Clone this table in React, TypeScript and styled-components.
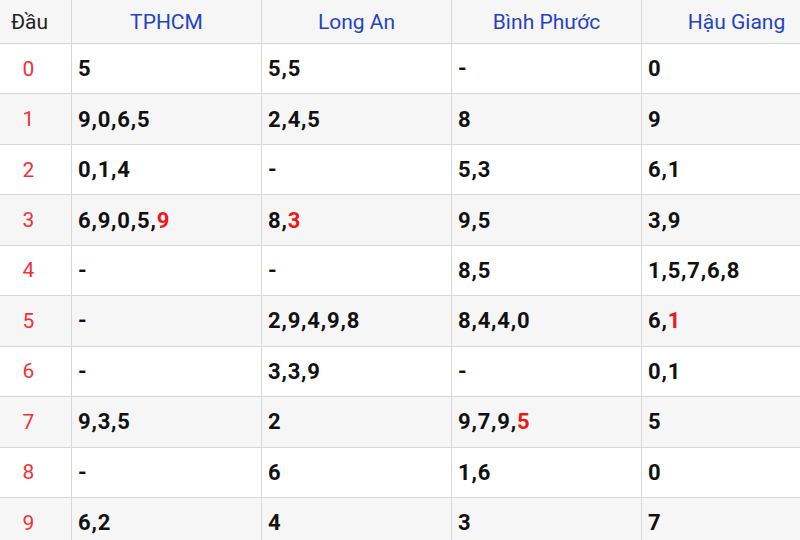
import * as React from "react";
import styled, { createGlobalStyle } from "styled-components";

const GlobalStyle = createGlobalStyle`
  html, body {
    margin: 0;
    padding: 0;
    background: #fff;
    overflow: hidden;
  }
  body {
    font-family: Roboto, "Noto Sans", sans-serif;
  }
`;

const provinces = ["TPHCM", "Long An", "Bình Phước", "Hậu Giang"];

// each cell: list of digits, the last one is red when flagged
type Cell = { digits: string[]; hot?: boolean };

const c = (s: string, hot?: boolean): Cell => ({
  digits: s === "-" ? ["-"] : s.split(","),
  hot,
});

const rows: Cell[][] = [
  [c("5"), c("5,5"), c("-"), c("0")],
  [c("9,0,6,5"), c("2,4,5"), c("8"), c("9")],
  [c("0,1,4"), c("-"), c("5,3"), c("6,1")],
  [c("6,9,0,5,9", true), c("8,3", true), c("9,5"), c("3,9")],
  [c("-"), c("-"), c("8,5"), c("1,5,7,6,8")],
  [c("-"), c("2,9,4,9,8"), c("8,4,4,0"), c("6,1", true)],
  [c("-"), c("3,3,9"), c("-"), c("0,1")],
  [c("9,3,5"), c("2"), c("9,7,9,5", true), c("5")],
  [c("-"), c("6"), c("1,6"), c("0")],
  [c("6,2"), c("4"), c("3"), c("7")],
];

const App: React.FC = () => {
  return (
    <>
      <GlobalStyle />
      <Table>
        <colgroup>
          <col style={{ width: 72 }} />
          {provinces.map(p => (
            <col key={p} style={{ width: 190 }} />
          ))}
        </colgroup>
        <thead>
          <HeadRow>
            <HeadCell>Đầu</HeadCell>
            {provinces.map(p => (
              <HeadCell key={p} province>
                {p}
              </HeadCell>
            ))}
          </HeadRow>
        </thead>
        <tbody>
          {rows.map((row, i) => (
            <Row key={i} striped={i % 2 === 1}>
              <IndexCell>{i}</IndexCell>
              {row.map((cell, j) => (
                <Cell key={j}>
                  {cell.digits.map((d, k) => {
                    const last = k === cell.digits.length - 1;
                    return (
                      <React.Fragment key={k}>
                        {last && cell.hot ? <Hot>{d}</Hot> : d}
                        {!last && ","}
                      </React.Fragment>
                    );
                  })}
                </Cell>
              ))}
            </Row>
          ))}
        </tbody>
      </Table>
    </>
  );
};

export default App;

const Table = styled.table`
  width: 832px;
  table-layout: fixed;
  border-collapse: collapse;
  margin-top: -1px;
  margin-left: -1px;
  td,
  th {
    border: 1px solid #d8d8d8;
  }
`;

const HeadRow = styled.tr`
  height: 44px;
  background: #f6f6f6;
`;

const HeadCell = styled.th<{ province?: boolean }>`
  font-weight: 400;
  font-size: 21px;
  text-align: center;
  vertical-align: middle;
  padding: ${p => (p.province ? "0" : "0 12px 0 0")};
  color: ${p => (p.province ? "#2443c2" : "#222")};
`;

const Row = styled.tr<{ striped?: boolean }>`
  height: 50.45px;
  background: ${p => (p.striped ? "#f6f6f6" : "#fff")};
`;

const IndexCell = styled.td`
  font-size: 21px;
  color: #f0313c;
  text-align: center;
  vertical-align: middle;
  padding: 0 14px 0 0;
`;

const Cell = styled.td`
  font-size: 22px;
  font-weight: 700;
  color: #111;
  letter-spacing: 0.8px;
  padding: 0 0 0 6px;
  vertical-align: middle;
`;

const Hot = styled.span`
  color: #f01818;
`;
